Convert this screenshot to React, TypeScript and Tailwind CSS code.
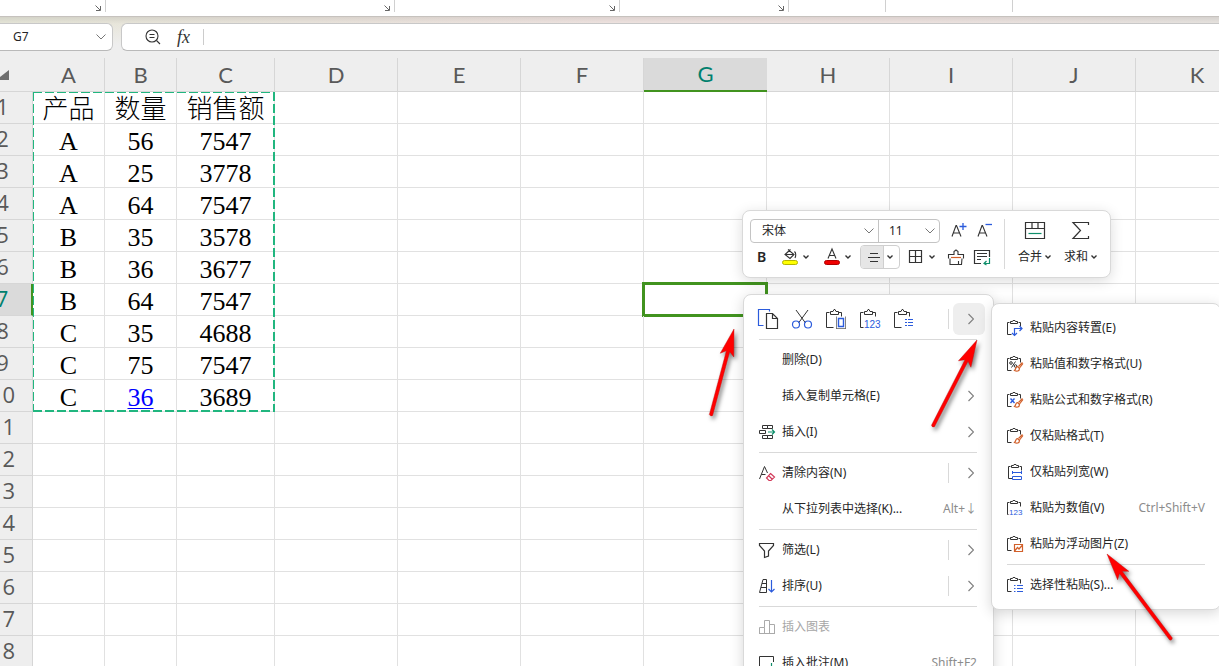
import type { ReactNode } from 'react'

const columns = ['A', 'B', 'C', 'D', 'E', 'F', 'G', 'H', 'I', 'J', 'K']

const cells: string[][] = [
  ['产品', '数量', '销售额'],
  ['A', '56', '7547'],
  ['A', '25', '3778'],
  ['A', '64', '7547'],
  ['B', '35', '3578'],
  ['B', '36', '3677'],
  ['B', '64', '7547'],
  ['C', '35', '4688'],
  ['C', '75', '7547'],
  ['C', '36', '3689'],
]

const rows = Array.from({ length: 19 }, (_, i) => i + 1)

const BLUE = '#2b5bdc'
const INK = '#333333'
const ORANGE = '#d2602a'
const GREEN = '#0f8f6b'

interface IconProps {
  size?: number
  children: ReactNode
}

const Icon = ({ size = 16, children }: IconProps) => (
  <svg
    width={size}
    height={size}
    viewBox={`0 0 ${size} ${size}`}
    fill="none"
    stroke={INK}
    className="shrink-0 overflow-visible"
    aria-hidden="true"
  >
    {children}
  </svg>
)

const ChevronDown = ({ small = false }: { small?: boolean }) =>
  small ? (
    <svg width="6" height="4" viewBox="0 0 6 4" fill="none" stroke={INK} strokeWidth="1.4" className="shrink-0" aria-hidden="true">
      <path d="M.5.5 3 3 5.5.5" />
    </svg>
  ) : (
    <svg width="10" height="6" viewBox="0 0 10 6" fill="none" stroke="#777777" className="shrink-0" aria-hidden="true">
      <path d="M.5.5 5 5 9.5.5" />
    </svg>
  )

const ChevronRight = () => (
  <svg width="6" height="12" viewBox="0 0 6 12" fill="none" stroke="#808080" strokeWidth="1.2" className="shrink-0" aria-hidden="true">
    <path d="M.5 1 5.5 6l-5 5" />
  </svg>
)

/* ---------- clipboard icons ---------- */

const Clip = () => (
  <>
    <path d="M2.5 2.5h-2v12h4M11.5 2.5h2v4" />
    <path d="M3.5 1.5h2l.5-1h2l.5 1h2v2h-7z" />
  </>
)

const BigClip = () => (
  <>
    <path d="M3.5 3.5h-3v15h7M12.5 3.5h3v4" />
    <path d="M4.5 2.5h2.5l1-2h1l1 2h2.5v3h-8z" />
  </>
)

const Brush = () => (
  <g stroke={ORANGE} strokeWidth="1.2">
    <path d="M15.5 6.5 11.5 10.5M16 7.5 12.5 12" />
    <path d="M10.5 10.5c-2 0-1.5 3-3 4 2 1 5 1 5-2z" />
  </g>
)

const PasteTranspose = () => (
  <Icon>
    <Clip />
    <path stroke={BLUE} strokeWidth="1.2" d="M7.5 15V8.5h7M12.5 6l2.5 2.5-2.5 2.5M5 13l2.5 2.5L10 13" />
  </Icon>
)

const PastePercentFormat = () => (
  <Icon>
    <Clip />
    <path d="M8.5 5.5 4.5 11.5" />
    <circle cx="4" cy="7" r="1.3" />
    <circle cx="8.5" cy="10" r="1.3" />
    <Brush />
  </Icon>
)

const PasteFormulaFormat = () => (
  <Icon>
    <Clip />
    <path stroke={BLUE} strokeWidth="1.4" d="M3.5 6.5l4 4.5M7.5 6.5l-4 4.5" />
    <Brush />
  </Icon>
)

const PasteFormat = () => (
  <Icon>
    <Clip />
    <Brush />
  </Icon>
)

const PasteColumnWidth = () => (
  <Icon>
    <g transform="translate(1 0)">
      <Clip />
    </g>
    <path stroke={BLUE} d="M5.5 7v3M14.5 7v3M5.5 8.5h9M5.5 12.5h9v3h-9z" />
  </Icon>
)

const PasteValues = () => (
  <Icon>
    <path d="M2.5 2.5h-2v12h1M11.5 2.5h2v4" />
    <path d="M3.5 1.5h2l.5-1h2l.5 1h2v2h-7z" />
    <text x="2" y="15" fontSize="8" fill={BLUE} stroke="none" fontFamily="Liberation Sans, sans-serif">
      123
    </text>
  </Icon>
)

const PastePicture = () => (
  <Icon>
    <Clip />
    <path stroke={ORANGE} strokeWidth="1.2" d="M7.5 8.5h8v7h-8zM8 14.5l2.5-3 1.5 1.5 3-3.5" />
  </Icon>
)

const PasteSpecial = () => (
  <Icon>
    <Clip />
    <path stroke={BLUE} d="M7 8.5h1.5M10 8.5h6M7 11.5h1.5M10 11.5h6M7 14.5h1.5M10 14.5h6" />
  </Icon>
)

/* ---------- context menu icons ---------- */

const InsertIcon = () => (
  <Icon>
    <path d="M3.5 1.5h5v3h-5zM8.5 1.5h5v3h-5zM.5 6.5h6v3h-6zM3.5 11.5h5v3h-5zM8.5 11.5h5v3h-5z" />
    <path stroke={GREEN} strokeWidth="1.2" d="M9 8h6.5M13 5.5 15.5 8 13 10.5" />
  </Icon>
)

const ClearIcon = () => (
  <Icon>
    <path d="M.5 14 5.5 1.5 8.5 8M2.5 9.5h4" />
    <path stroke="#d23a5a" strokeWidth="1.2" d="M11.5 8.5l4 3.5-3.5 3.5h-2L7.5 13zM9.5 10.5l3.5 3.5" />
  </Icon>
)

const FilterIcon = () => (
  <Icon>
    <path strokeWidth="1.2" d="M.5 1.5h14v2L9.5 9v5l-4 1.5V9L.5 3.5z" />
  </Icon>
)

const SortIcon = () => (
  <Icon>
    <path d="M.5 14.5 4 1.5h3.5v13H.5M3 5.5h4.5M2 9.5h5.5" />
    <path stroke={BLUE} strokeWidth="1.2" d="M12.5 2v12M9.5 11l3 3 3-3" />
  </Icon>
)

const ChartIcon = () => (
  <Icon>
    <path stroke="#aaaaaa" d="M.5 15V8.5h5V15M5.5 8.5v-7h5V15M10.5 5.5h5V15M0 14.5h16" />
  </Icon>
)

const CommentIcon = () => (
  <Icon>
    <path d="M9 12.5H6l-2 3v-3H.5v-11h14V7" />
    <path stroke={GREEN} strokeWidth="1.2" d="M12.5 8v7M9 11.5h7" />
  </Icon>
)

const CopyIcon = () => (
  <Icon size={20}>
    <path stroke={BLUE} strokeWidth="1.2" d="M5.5 16.5H.5V.5h11v2" />
    <path strokeWidth="1.2" d="M8.5 4.5h6l5 5v10h-11zM14.5 4.5v5h5" />
  </Icon>
)

const CutIcon = () => (
  <Icon size={20}>
    <path d="M4 1l9.5 13M16 1 6.5 14" />
    <circle stroke={BLUE} strokeWidth="1.2" cx="4" cy="15.5" r="3.5" />
    <circle stroke={BLUE} strokeWidth="1.2" cx="16" cy="15.5" r="3.5" />
  </Icon>
)

const PasteIcon = () => (
  <Icon size={20}>
    <BigClip />
    <path d="M10.5 19.5v-12M10 19.5h10M19.5 19.5v-12" strokeOpacity="0.6" />
    <path stroke={BLUE} strokeWidth="1.4" d="M12.5 9.5h5v8h-5z" />
  </Icon>
)

const PasteValuesBig = () => (
  <Icon size={20}>
    <path d="M3.5 3.5h-3v15h3M12.5 3.5h3v4" />
    <path d="M4.5 2.5h2.5l1-2h1l1 2h2.5v3h-8z" />
    <text x="4" y="19" fontSize="10" fill={BLUE} stroke="none" fontFamily="Liberation Sans, sans-serif">
      123
    </text>
  </Icon>
)

const PasteSpecialBig = () => (
  <Icon size={20}>
    <BigClip />
    <path stroke={BLUE} strokeWidth="1.2" d="M11 10.5h2M14 10.5h5M11 13.5h2M14 13.5h5M11 16.5h2M14 16.5h5" />
  </Icon>
)

/* ---------- floating toolbar icons ---------- */

const FontGrow = () => (
  <Icon>
    <path strokeWidth="1.1" d="M1 13.5 5 2.500h.5L10 13.500M2.500 10H9" />
    <path stroke={BLUE} strokeWidth="1.3" d="M8.500 3.500h7M12 0v7" />
  </Icon>
)

const FontShrink = () => (
  <Icon>
    <path strokeWidth="1.1" d="M1 13.500 5 2.500h.5L10 13.500M2.500 10H9" />
    <path stroke={BLUE} strokeWidth="1.3" d="M8.500 1.500H15" />
  </Icon>
)

const FillIcon = () => (
  <Icon>
    <path strokeWidth="1.1" d="M6 .5 12 5.500 8 9.500 3 5.500 8.500.500M3 5.500h9M12.500 2.500c2 2 1.500 4 .5 6.500" />
    <rect x=".5" y="11.500" width="15" height="4" rx="2" fill="#ffff00" stroke="#b5b500" />
  </Icon>
)

const FontColorIcon = () => (
  <Icon>
    <path strokeWidth="1.1" d="M4 9.500 8 0l4 9.500M5.500 6.500h5" />
    <rect x=".5" y="11.500" width="15" height="4" rx="2" fill="#f00000" stroke="#b00000" />
  </Icon>
)

const AlignIcon = () => (
  <Icon size={12}>
    <path strokeWidth="1.2" d="M2 2.500h8M0 6.500h12M2 10.500h8" />
  </Icon>
)

const BorderIcon = () => (
  <Icon size={14}>
    <path strokeWidth="1.2" d="M.5.500h12v12H.5zM6.500.500v12M.5 6.500h12" />
  </Icon>
)

const PainterIcon = () => (
  <Icon>
    <path strokeWidth="1.1" d="M.5 9.500v-4h5.500v-3l2-1.500 2 1.500v3h5.500v4M2 9.500v6h11.500l.5-6M10.500 12v3" />
    <path stroke={ORANGE} strokeWidth="1.2" d="M3 8.500h10" />
  </Icon>
)

const WrapIcon = () => (
  <Icon>
    <path strokeWidth="1.2" d="M7 14.500H.5v-13h15V8M3 4.500h10M3 7.500h10M3 10.500h4" />
    <path stroke={GREEN} strokeWidth="1.2" d="M15.500 9v5.500h-5M12.500 12l-2.500 2.500 2.500 1.500" />
  </Icon>
)

const MergeIcon = () => (
  <Icon size={20}>
    <path strokeWidth="1.2" d="M.5 1.500h19v16H.5zM.5 7.500h19M7 1.500v6M13 1.500v6" />
    <path stroke={GREEN} strokeWidth="1.2" d="M3.500 12.500h13" />
  </Icon>
)

const SumIcon = () => (
  <Icon size={20}>
    <path strokeWidth="1.2" d="M17.500 4V1.500H2L9.500 9.500 2 17.500h15.500V15" />
  </Icon>
)

/* ---------- top bars ---------- */

const RibbonGroup = ({ className, launcher = true }: { className: string; launcher?: boolean }) => (
  <div className={`flex h-3 shrink-0 justify-end border-r border-[#d0d0d0] pr-0.5 ${className}`}>
    {launcher && (
      <button aria-label="更多设置" className="mt-1 h-2 w-2">
        <svg width="6" height="6" viewBox="0 0 6 6" fill="none" stroke="#666666" className="overflow-visible">
          <path d="M.5.500 5 5M5.500 1v4.500H1" />
        </svg>
      </button>
    )}
  </div>
)

const Ribbon = () => (
  <div className="flex h-4 shrink-0 overflow-hidden bg-white">
    <RibbonGroup className="w-[106px]" />
    <RibbonGroup className="w-[289px]" />
    <RibbonGroup className="w-[225px]" />
    <RibbonGroup className="w-[169px]" />
    <RibbonGroup className="w-[97px]" launcher={false} />
    <RibbonGroup className="w-[127px]" launcher={false} />
  </div>
)

const FormulaBar = () => (
  <div className="flex shrink-0 gap-2 border-t border-[#c6c2be] bg-[linear-gradient(to_bottom,rgba(0,0,0,0.08),rgba(0,0,0,0)_7px,#eeeeee_28px),linear-gradient(to_right,#e6e6d9,#f0e4e1_50%,#efe4e1_75%,#e8e4e0)] pt-1.5">
    <div className="flex h-7 w-[113px] items-center rounded-r-md border border-l-0 border-[#c8c8c8] border-b-[#b9b9b9] bg-white pr-1.5 pl-[13px]">
      <input
        aria-label="名称框"
        defaultValue="G7"
        className="w-full min-w-0 font-['Noto_Sans',sans-serif] text-xs text-[#262626] outline-none"
      />
      <button aria-label="展开名称框">
        <ChevronDown />
      </button>
    </div>
    <div className="flex h-7 flex-1 items-center rounded-l-md border border-r-0 border-[#c8c8c8] border-b-[#b9b9b9] bg-white pl-[23px]">
      <button aria-label="缩小">
        <Icon>
          <circle cx="7" cy="7" r="6" strokeWidth="1.1" />
          <path strokeWidth="1.1" d="M11.500 11.500 15 15M4.500 5.500h5M4.500 8.500h5" />
        </Icon>
      </button>
      <button
        aria-label="插入函数"
        className="ml-4 w-5 text-left font-['Liberation_Serif',serif] text-lg leading-5 text-[#333333] italic"
      >
        fx
      </button>
      <span className="ml-1.5 h-4 w-px bg-[#cccccc]" />
      <input aria-label="编辑栏" className="h-5 min-w-0 flex-1 px-2 text-sm outline-none" />
    </div>
  </div>
)

/* ---------- sheet ---------- */

const Sheet = () => (
  <div className="relative min-h-0 flex-1 overflow-hidden bg-[#eeeeee] pt-[7px]">
    {/* scrolled a little to the right, so the row numbers are cut */}
    <table className="-ml-[27px] w-[1400px] table-fixed border-separate border-spacing-0 bg-white font-['Lato',sans-serif]">
      <colgroup>
        <col className="w-[60px]" />
        <col className="w-[72px]" />
        <col className="w-[72px]" />
        <col className="w-[98px]" />
        {columns.slice(3).map((c) => (
          <col key={c} className="w-[123px]" />
        ))}
        <col />
      </colgroup>
      <thead>
        <tr className="h-[34px]">
          <th className="border-b border-[#d6d6d6] bg-[#eeeeee] p-0">
            <svg width="9" height="10" viewBox="0 0 9 10" className="ml-[27px] block" aria-hidden="true">
              <path d="M9 0v10H0V7z" fill="#6e6e6e" />
            </svg>
          </th>
          {columns.map((c) => (
            <th
              key={c}
              scope="col"
              className={
                c === 'G'
                  ? 'border-b-2 border-[#41931f] bg-[#dadada] p-0 text-[22px] leading-8 font-normal text-[#00806e]'
                  : 'border-r border-b border-[#d6d6d6] bg-[#eeeeee] p-0 text-[22px] leading-8 font-normal text-[#595959]'
              }
            >
              {c}
            </th>
          ))}
          <th className="border-b border-[#d6d6d6] bg-[#eeeeee] p-0" />
        </tr>
      </thead>
      <tbody>
        {rows.map((r) => (
          <tr key={r} className="h-8">
            <th
              scope="row"
              className={
                r === 7
                  ? "border-r-2 border-b border-r-[#41931f] border-b-[#d6d6d6] bg-[#dadada] p-0 pb-[3px] font-['Open_Sans',sans-serif] text-[22px] leading-7 font-normal text-[#00806e]"
                  : "border-r border-b border-[#d6d6d6] bg-[#eeeeee] p-0 pb-[3px] font-['Open_Sans',sans-serif] text-[22px] leading-7 font-normal text-[#595959]"
              }
            >
              {r}
            </th>
            {columns.map((c, i) => {
              const value = cells[r - 1]?.[i] ?? ''
              const linked = r === 10 && c === 'B'
              return (
                <td
                  key={c}
                  className="relative border-r border-b border-[#e1e1e1] p-0 pt-[5px] text-center font-['Liberation_Serif','Noto_Sans_CJK_SC',serif] text-[26px] leading-[26px] font-light whitespace-nowrap text-black"
                >
                  {linked ? (
                    <a href="#B10" className="text-[#0000ff] underline decoration-1 underline-offset-2">
                      {value}
                    </a>
                  ) : (
                    value
                  )}
                  {r === 7 && c === 'G' && <span className="absolute -inset-0.5 border-3 border-[#41931f]" />}
                </td>
              )
            })}
            <td className="border-b border-[#e1e1e1] p-0" />
          </tr>
        ))}
      </tbody>
    </table>
    {/* marching ants round the copied range A1:C10 */}
    <svg
      width="242"
      height="320"
      viewBox="0 0 242 320"
      fill="none"
      stroke="#21b67f"
      strokeDasharray="9 3"
      className="absolute top-[41px] left-[33px]"
      aria-hidden="true"
    >
      <path d="M0 .500h242M.500 0v320" strokeWidth="1" />
      <path d="M241 0v320M0 319h242" strokeWidth="2" />
    </svg>
  </div>
)

/* ---------- floating toolbar ---------- */

const SplitButton = ({ label, children }: { label: string; children: ReactNode }) => (
  <button aria-label={label} className="flex h-6 items-center gap-[5px]">
    {children}
    <ChevronDown small />
  </button>
)

const FloatingToolbar = () => (
  <div className="absolute top-[210px] left-[742px] flex rounded-lg border border-[#d9d9d9] bg-white py-2 pr-[13px] pl-[7px] font-['Noto_Sans','Noto_Sans_CJK_SC',sans-serif] text-xs text-[#262626] shadow-[0_3px_14px_rgba(0,0,0,0.14)]">
    <div className="flex flex-col gap-0.5">
      <div className="flex items-center">
        <div className="flex h-6 rounded border border-[#c4c4c4]">
          <label className="relative flex w-32 items-center border-r border-[#c4c4c4]">
            <span className="sr-only">字体</span>
            <select className="w-full appearance-none pl-[11px] outline-none">
              <option>宋体</option>
            </select>
            <span className="pointer-events-none absolute right-1">
              <ChevronDown />
            </span>
          </label>
          <label className="relative flex w-[60px] items-center">
            <span className="sr-only">字号</span>
            <select className="w-full appearance-none pl-2.5 outline-none">
              <option>11</option>
            </select>
            <span className="pointer-events-none absolute right-1">
              <ChevronDown />
            </span>
          </label>
        </div>
        <button aria-label="增大字号" className="ml-[11px]">
          <FontGrow />
        </button>
        <button aria-label="减小字号" className="ml-2.5">
          <FontShrink />
        </button>
      </div>
      <div className="flex items-center">
        <button aria-label="加粗" className="ml-[7px] w-[25px] text-left text-sm font-semibold">
          B
        </button>
        <SplitButton label="填充颜色">
          <FillIcon />
        </SplitButton>
        <span className="w-[15px]" />
        <SplitButton label="字体颜色">
          <FontColorIcon />
        </SplitButton>
        <button
          aria-label="水平居中"
          className="ml-[9px] flex h-6 w-10 items-center overflow-hidden rounded border border-[#cfcfcf]"
        >
          <span className="flex h-full w-[23px] items-center justify-end border-r border-[#cfcfcf] bg-[#e6e6e6] pr-[3px]">
            <AlignIcon />
          </span>
          <span className="flex flex-1 pl-[3px]">
            <ChevronDown small />
          </span>
        </button>
        <span className="w-[9px]" />
        <button aria-label="边框" className="flex h-6 items-center gap-1.5">
          <BorderIcon />
          <ChevronDown small />
        </button>
        <button aria-label="格式刷" className="ml-[13px]">
          <PainterIcon />
        </button>
        <button aria-label="自动换行" className="ml-2.5">
          <WrapIcon />
        </button>
      </div>
    </div>
    <span className="mr-[13px] ml-[11px] w-px bg-[#d9d9d9]" />
    <button className="flex flex-col items-center pt-0.5">
      <MergeIcon />
      <span className="mt-2 flex items-center gap-[3px]">
        合并
        <ChevronDown small />
      </span>
    </button>
    <button className="ml-[13px] flex flex-col items-center pt-0.5">
      <SumIcon />
      <span className="mt-2 flex items-center gap-[3px]">
        求和
        <ChevronDown small />
      </span>
    </button>
  </div>
)

/* ---------- context menu ---------- */

interface MenuItemProps {
  label: string
  icon?: ReactNode
  shortcut?: string
  arrow?: boolean
  split?: boolean
  disabled?: boolean
}

const MenuItem = ({ label, icon, shortcut, arrow, split, disabled }: MenuItemProps) => (
  <button
    role="menuitem"
    disabled={disabled}
    className="flex h-9 w-full items-center text-left whitespace-nowrap disabled:text-[#a6a6a6]"
  >
    <span className="flex w-[23px] shrink-0">{icon}</span>
    <span className="flex-1">{label}</span>
    {shortcut && <span className="text-[#8c8c8c]">{shortcut}</span>}
    {arrow && (
      <span
        className={
          split
            ? 'flex h-5 w-[29px] items-center justify-end border-l border-[#d9d9d9] pr-[3px]'
            : 'flex h-5 w-[29px] items-center justify-end pr-[3px]'
        }
      >
        <ChevronRight />
      </span>
    )}
  </button>
)

const Separator = () => <div role="separator" className="my-0.5 h-px bg-[#d9d9d9]" />

const menuSurface =
  "absolute rounded-lg border border-[#d9d9d9] bg-white py-1.5 pl-[15px] font-['Noto_Sans','Noto_Sans_CJK_SC',sans-serif] text-xs text-[#262626] shadow-[0_3px_14px_rgba(0,0,0,0.16)]"

const PasteMenu = () => (
  <div role="menu" className={`${menuSurface} top-2 left-[247px] w-[230px] pr-[15px]`}>
    <MenuItem icon={<PasteTranspose />} label="粘贴内容转置(E)" />
    <MenuItem icon={<PastePercentFormat />} label="粘贴值和数字格式(U)" />
    <MenuItem icon={<PasteFormulaFormat />} label="粘贴公式和数字格式(R)" />
    <MenuItem icon={<PasteFormat />} label="仅粘贴格式(T)" />
    <MenuItem icon={<PasteColumnWidth />} label="仅粘贴列宽(W)" />
    <MenuItem icon={<PasteValues />} label="粘贴为数值(V)" shortcut="Ctrl+Shift+V" />
    <MenuItem icon={<PastePicture />} label="粘贴为浮动图片(Z)" />
    <Separator />
    <MenuItem icon={<PasteSpecial />} label="选择性粘贴(S)..." />
  </div>
)

const ContextMenu = () => (
  <div role="menu" className={`${menuSurface} top-[294px] left-[743px] w-[251px] pr-4`}>
    <div className="-mx-px flex h-9 items-center gap-3.5">
      <button aria-label="复制">
        <CopyIcon />
      </button>
      <button aria-label="剪切">
        <CutIcon />
      </button>
      <button aria-label="粘贴">
        <PasteIcon />
      </button>
      <button aria-label="粘贴为数值">
        <PasteValuesBig />
      </button>
      <button aria-label="选择性粘贴">
        <PasteSpecialBig />
      </button>
      <span className="ml-auto h-5 w-px bg-[#d9d9d9]" />
      <button
        aria-label="更多粘贴选项"
        className="-mr-[7px] -ml-2.5 flex h-8 w-8 items-center justify-center rounded-md bg-[#eeeeee] pl-1"
      >
        <ChevronRight />
      </button>
    </div>
    <Separator />
    <MenuItem label="删除(D)" />
    <MenuItem label="插入复制单元格(E)" arrow />
    <MenuItem icon={<InsertIcon />} label="插入(I)" arrow />
    <Separator />
    <MenuItem icon={<ClearIcon />} label="清除内容(N)" arrow split />
    <MenuItem label="从下拉列表中选择(K)..." shortcut="Alt+↓" />
    <Separator />
    <MenuItem icon={<FilterIcon />} label="筛选(L)" arrow split />
    <MenuItem icon={<SortIcon />} label="排序(U)" arrow split />
    <Separator />
    <MenuItem icon={<ChartIcon />} label="插入图表" disabled />
    <MenuItem icon={<CommentIcon />} label="插入批注(M)" shortcut="Shift+F2" />
    <PasteMenu />
  </div>
)

/* ---------- red arrows over the page ---------- */

interface ArrowProps {
  from: [number, number]
  to: [number, number]
}

const Arrow = ({ from, to }: ArrowProps) => {
  const dx = to[0] - from[0]
  const dy = to[1] - from[1]
  const length = Math.hypot(dx, dy)
  const angle = (Math.atan2(dy, dx) * 180) / Math.PI

  return (
    <g transform={`translate(${to[0]} ${to[1]}) rotate(${angle})`} stroke="#c01010" strokeWidth="0.4" fill="#ff0000">
      <path d={`M0 0-27-7-23-1.700H${-length}q-2 1.700 0 3.400H-23L-27 7z`} />
    </g>
  )
}

const Annotations = () => (
  <svg
    className="pointer-events-none absolute inset-0 h-full w-full drop-shadow-[2px_3px_2px_rgba(0,0,0,0.5)]"
    aria-hidden="true"
  >
    <Arrow from={[711, 415]} to={[734, 329]} />
    <Arrow from={[933, 426]} to={[977, 340]} />
    <Arrow from={[1171, 639]} to={[1107, 554]} />
  </svg>
)

export default function App() {
  return (
    <main className="relative flex h-screen flex-col overflow-hidden bg-white">
      <Ribbon />
      <FormulaBar />
      <Sheet />
      <FloatingToolbar />
      <ContextMenu />
      <Annotations />
    </main>
  )
}
